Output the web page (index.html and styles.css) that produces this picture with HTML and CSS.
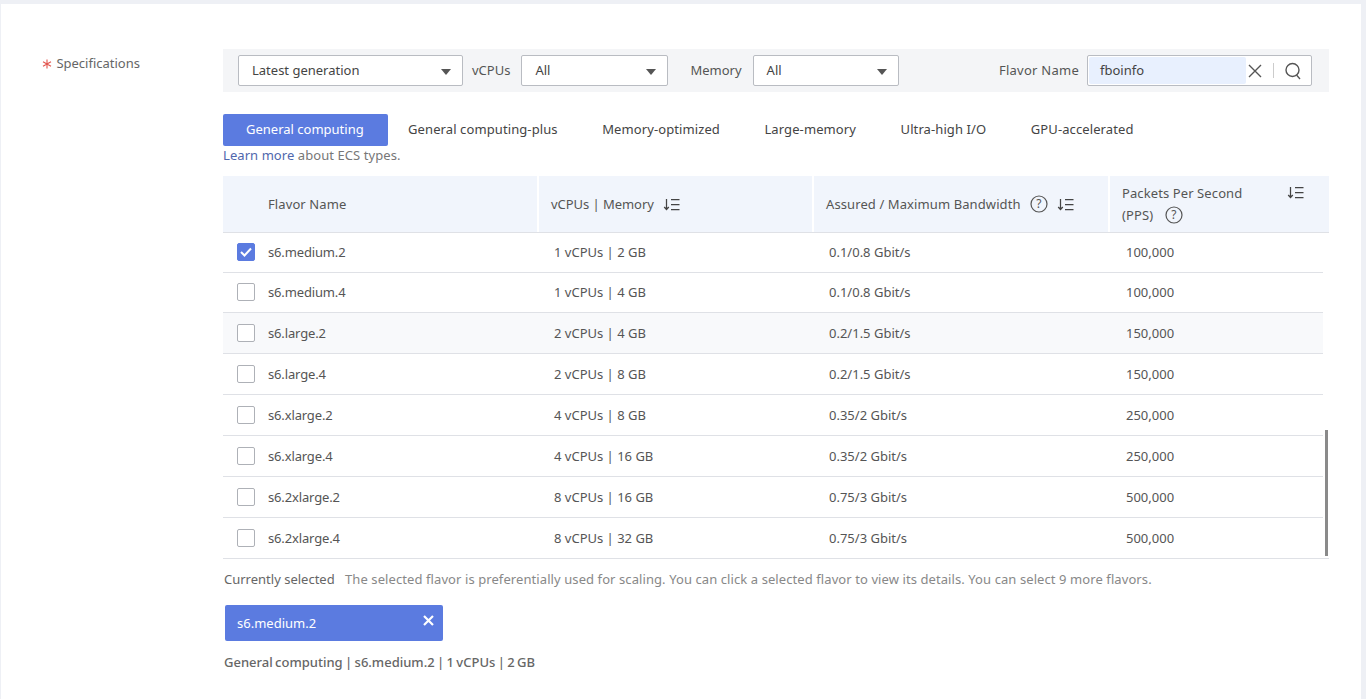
FILE: index.html
```html
<!DOCTYPE html>
<html lang="en">
<head>
  <meta charset="UTF-8" />
  <title>Specifications</title>
  <link rel="stylesheet" href="styles.css">
</head>
<body>
  <div class="card">
    <div class="spec-label">
      <svg class="req" width="10" height="10" viewBox="0 0 10 10"><path d="M5 0.5v9M1 2.7l8 4.6M9 2.7l-8 4.6" stroke="#e2564f" stroke-width="1.1" fill="none"/></svg>
      Specifications
    </div>
    <div class="spec-main">

      <!-- Filters -->
      <div class="filters">
        <div class="select select-gen">Latest generation<span class="caret"></span></div>
        <span class="flabel flabel-cpu">vCPUs</span>
        <div class="select select-cpu">All<span class="caret"></span></div>
        <span class="flabel flabel-mem">Memory</span>
        <div class="select select-mem">All<span class="caret"></span></div>
        <span class="flabel flabel-name">Flavor Name</span>
        <div class="search">
          <span class="search-text">fboinfo</span>
          <svg class="ic-clear" width="14" height="14" viewBox="0 0 14 14"><path d="M1 1l12 12M13 1L1 13" stroke="#555" stroke-width="1.4" fill="none"/></svg>
          <span class="search-sep"></span>
          <svg class="ic-search" width="18" height="18" viewBox="0 0 18 18"><circle cx="8.5" cy="8" r="6.5" stroke="#555" stroke-width="1.4" fill="none"/><path d="M12.5 13l3.5 4" stroke="#555" stroke-width="1.4" fill="none"/></svg>
        </div>
      </div>

      <!-- Type tabs -->
      <div class="tabs">
        <div class="tab active">General computing</div>
        <div class="tab">General computing-plus</div>
        <div class="tab">Memory-optimized</div>
        <div class="tab">Large-memory</div>
        <div class="tab">Ultra-high I/O</div>
        <div class="tab">GPU-accelerated</div>
      </div>
      <div class="learn"><a href="#">Learn more</a> about ECS types.</div>

      <!-- Flavor table -->
      <div class="thead">
        <div class="th th-name">Flavor Name</div>
        <div class="th th-cpu">vCPUs | Memory
          <svg class="ic-sort" width="17" height="13" viewBox="0 0 17 13"><path d="M3.5 1v10.5M1.2 9l2.3 2.5L5.8 9M8 1.5h8.5M8 6.5h8.5M8 11.5h8.5" stroke="#444" stroke-width="1.25" fill="none"/></svg>
        </div>
        <div class="th">Assured / Maximum Bandwidth
          <svg class="ic-help" width="18" height="18" viewBox="0 0 18 18"><circle cx="9" cy="9" r="8" stroke="#555" stroke-width="1.2" fill="none"/><text x="9" y="13" class="ic-q">?</text></svg>
          <svg class="ic-sort" width="17" height="13" viewBox="0 0 17 13"><path d="M3.5 1v10.5M1.2 9l2.3 2.5L5.8 9M8 1.5h8.5M8 6.5h8.5M8 11.5h8.5" stroke="#444" stroke-width="1.25" fill="none"/></svg>
        </div>
        <div class="th th-pps">
          <div class="pps-text">Packets Per Second<br>(PPS)
            <svg class="ic-help" width="18" height="18" viewBox="0 0 18 18"><circle cx="9" cy="9" r="8" stroke="#555" stroke-width="1.2" fill="none"/><text x="9" y="13" class="ic-q">?</text></svg>
          </div>
          <svg class="ic-sort ic-sort-pps" width="17" height="13" viewBox="0 0 17 13"><path d="M3.5 1v10.5M1.2 9l2.3 2.5L5.8 9M8 1.5h8.5M8 6.5h8.5M8 11.5h8.5" stroke="#444" stroke-width="1.25" fill="none"/></svg>
        </div>
      </div>

      <div class="tbody">
        <div class="row row-first">
          <div class="td td-name"><span class="check checked"><svg width="14" height="12" viewBox="0 0 14 12"><path d="M2 6l3.5 3.5L12 2.5" stroke="#fff" stroke-width="2" fill="none"/></svg></span>s6.medium.2</div>
          <div class="td">1 vCPUs | 2 GB</div><div class="td">0.1/0.8 Gbit/s</div><div class="td">100,000</div>
        </div>
        <div class="row row-second">
          <div class="td td-name"><span class="check"></span>s6.medium.4</div>
          <div class="td">1 vCPUs | 4 GB</div><div class="td">0.1/0.8 Gbit/s</div><div class="td">100,000</div>
        </div>
        <div class="row row-hover">
          <div class="td td-name"><span class="check"></span>s6.large.2</div>
          <div class="td">2 vCPUs | 4 GB</div><div class="td">0.2/1.5 Gbit/s</div><div class="td">150,000</div>
        </div>
        <div class="row">
          <div class="td td-name"><span class="check"></span>s6.large.4</div>
          <div class="td">2 vCPUs | 8 GB</div><div class="td">0.2/1.5 Gbit/s</div><div class="td">150,000</div>
        </div>
        <div class="row">
          <div class="td td-name"><span class="check"></span>s6.xlarge.2</div>
          <div class="td">4 vCPUs | 8 GB</div><div class="td">0.35/2 Gbit/s</div><div class="td">250,000</div>
        </div>
        <div class="row">
          <div class="td td-name"><span class="check"></span>s6.xlarge.4</div>
          <div class="td">4 vCPUs | 16 GB</div><div class="td">0.35/2 Gbit/s</div><div class="td">250,000</div>
        </div>
        <div class="row">
          <div class="td td-name"><span class="check"></span>s6.2xlarge.2</div>
          <div class="td">8 vCPUs | 16 GB</div><div class="td">0.75/3 Gbit/s</div><div class="td">500,000</div>
        </div>
        <div class="row row-last">
          <div class="td td-name"><span class="check"></span>s6.2xlarge.4</div>
          <div class="td">8 vCPUs | 32 GB</div><div class="td">0.75/3 Gbit/s</div><div class="td">500,000</div>
        </div>
        <div class="scrollbar"></div>
      </div>

      <div class="selected-line">
        <span class="selected-title">Currently selected</span>
        <span class="selected-hint">The selected flavor is preferentially used for scaling. You can click a selected flavor to view its details. You can select 9 more flavors.</span>
      </div>
      <div class="tag"><span>s6.medium.2</span>
        <svg width="11" height="11" viewBox="0 0 11 11"><path d="M1 1l9 9M10 1l-9 9" stroke="#fff" stroke-width="2.2" fill="none"/></svg>
      </div>
      <div class="summary">General computing | s6.medium.2 | 1 vCPUs | 2 GB</div>
    </div>
  </div>
</body>
</html>
```

FILE: styles.css
```css
* {
  box-sizing: border-box;
  margin: 0;
  padding: 0;
}

html, body {
  height: 100%;
  overflow: hidden;
}

body {
  background: #eef0f5;
  font-family: "Noto Sans", "Open Sans", sans-serif;
  font-size: 13px;
  color: #555;
  padding: 4px 5px 0 1px;
}

.card {
  background: #fff;
  height: 100%;
  display: flex;
  padding: 45px 32px 0 41px;
}

.spec-label {
  width: 181px;
  flex: none;
  padding-top: 4px;
  color: #666;
  line-height: 20px;
}

.req {
  vertical-align: -1px;
  margin-right: 1px;
}

.spec-main {
  width: 1106px;
  flex: none;
}

/* filters */
.filters {
  height: 43px;
  background: #f4f5f7;
  display: flex;
  align-items: center;
  padding-left: 15px;
}

.select {
  height: 31px;
  border: 1px solid #b9bcc2;
  border-radius: 2px;
  background: #fff;
  padding: 0 13px;
  line-height: 29px;
  color: #444;
  position: relative;
}

.select-gen { width: 225px; }
.select-cpu { width: 147px; }
.select-mem { width: 146px; }

.caret {
  position: absolute;
  right: 11px;
  top: 13px;
  border-left: 5px solid transparent;
  border-right: 5px solid transparent;
  border-top: 6px solid #555;
}

.flabel {
  color: #555;
  line-height: 29px;
}

.flabel-cpu { margin: 0 11px 0 9px; }
.flabel-mem { margin: 0 11px 0 22px; }
.flabel-name { margin: 0 8px 0 auto; letter-spacing: 0.25px; }

.search {
  width: 225px;
  height: 31px;
  margin-right: 17px;
  border: 1px solid #b9bcc2;
  border-radius: 2px;
  background: #fff;
  display: flex;
  align-items: center;
  padding: 1px;
}

.search-text {
  width: 157px;
  height: 27px;
  background: #e8f0fe;
  border-radius: 2px;
  padding-left: 11px;
  line-height: 27px;
  color: #444;
}

.ic-clear { margin-left: 2px; }

.search-sep {
  width: 1px;
  height: 15px;
  background: #ccc;
  margin: 0 10px 0 11px;
}

/* tabs */
.tabs {
  display: flex;
  margin-top: 22px;
}

.tab {
  height: 32px;
  line-height: 30px;
  padding: 0 22.5px 0 22px;
  color: #444;
  white-space: nowrap;
  letter-spacing: 0.1px;
}

.tab.active {
  background: #5b7be0;
  color: #fff;
  width: 165px;
  padding: 0 0 0 23px;
  border-radius: 2px;
  margin-right: -2px;
  letter-spacing: 0;
}

.learn {
  line-height: 20px;
  color: #777;
  margin-bottom: 11px;
  margin-top: -1px;
  white-space: nowrap;
  letter-spacing: 0.07px;
}

.learn a {
  color: #4f67ad;
  text-decoration: none;
}

/* table */
.thead {
  display: grid;
  grid-template-columns: 316px 275px 296px 219px;
  height: 57px;
  background: #f1f5fc;
  border-bottom: 1px solid #dfe1e6;
}

.th {
  display: flex;
  align-items: center;
  padding-left: 12px;
  border-right: 2px solid #fff;
  color: #555;
  white-space: nowrap;
  letter-spacing: 0.1px;
}

.th-name {
  padding-left: 45px;
}

.th-cpu {
  letter-spacing: -0.05px;
}

.th-pps {
  border-right: 0;
  align-items: flex-start;
  padding-top: 6px;
  position: relative;
}

.pps-text {
  line-height: 22px;
}

.ic-sort { margin-left: 9px; }
.ic-help { margin-left: 9px; vertical-align: -4px; }
.th-pps .ic-help { margin-left: 8px; }

.ic-q {
  font-size: 12px;
  text-anchor: middle;
  fill: #555;
}

.ic-sort-pps {
  position: absolute;
  right: 25px;
  top: 10px;
}

.tbody {
  position: relative;
}

.row {
  display: grid;
  grid-template-columns: 316px 275px 296px 213px;
  width: 1100px;
  height: 41px;
  border-bottom: 1px solid #dfe1e6;
  align-items: center;
  color: #555;
}

.row-first { height: 40px; padding-bottom: 2px; }
.row-second { height: 40px; padding-bottom: 1px; }
.row-hover { background: #f8f9fb; }
.row-last { width: 1106px; }

.td {
  padding-left: 15px;
  white-space: nowrap;
}

.td:last-child {
  padding-left: 16px;
}

.td-name {
  display: flex;
  align-items: center;
  padding-left: 14px;
  letter-spacing: -0.15px;
}

.check {
  width: 18px;
  height: 18px;
  border: 1px solid #aeb1b7;
  border-radius: 2px;
  margin-right: 13px;
  background: #fff;
  display: flex;
  align-items: center;
  justify-content: center;
}

.check.checked {
  background: #5b7be0;
  border-color: #5b7be0;
}

.scrollbar {
  position: absolute;
  right: 1px;
  top: 197px;
  width: 3px;
  height: 126px;
  background: #8a8a8a;
}

/* selected */
.selected-line {
  margin: 10px 0 0 1px;
  line-height: 20px;
  white-space: nowrap;
}

.selected-title {
  color: #666;
  margin-right: 7px;
}

.selected-hint {
  color: #888;
  letter-spacing: 0.085px;
}

.tag {
  width: 218px;
  height: 36px;
  margin: 16px 0 0 2px;
  background: #5b7be0;
  border-radius: 2px;
  color: #fff;
  display: flex;
  align-items: center;
  justify-content: space-between;
  padding: 0 9px 0 12px;
}

.tag svg {
  margin-top: -6px;
}

.summary {
  margin: 11px 0 0 1px;
  line-height: 20px;
  font-weight: 500;
  color: #666;
  word-spacing: -1px;
}
```
